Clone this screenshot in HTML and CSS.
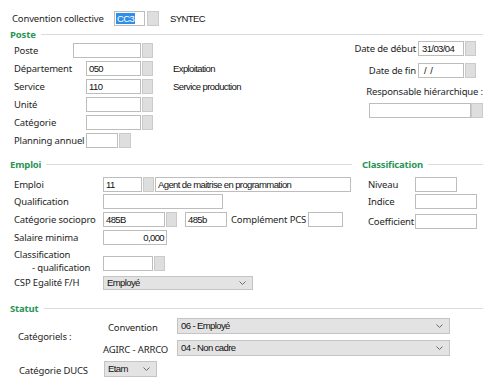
FILE: index.html
```html
<!DOCTYPE html>
<html>
<head>
  <title>Fiche salarié - Poste</title>
  <link rel="stylesheet" href="styles.css">
</head>
<body>

<div class="form">

  <div class="row conv-row">
    <span class="lbl conv-lbl">Convention collective</span>
    <span class="txt w-conv"><span class="sel">CC3</span></span>
    <span class="btn btn-conv"></span>
    <span class="info conv-info">SYNTEC</span>
  </div>

  <!-- Poste -->
  <div class="legend"><span>Poste</span></div>
  <div class="poste">
    <div class="col-left">
      <div class="row"><span class="lbl l-poste">Poste</span><span class="txt w-poste"></span><span class="btn"></span></div>
      <div class="row"><span class="lbl l-std">Département</span><span class="txt w-std">050</span><span class="btn"></span><span class="info">Exploitation</span></div>
      <div class="row"><span class="lbl l-std">Service</span><span class="txt w-std">110</span><span class="btn"></span><span class="info">Service production</span></div>
      <div class="row"><span class="lbl l-std">Unité</span><span class="txt w-std"></span><span class="btn"></span></div>
      <div class="row"><span class="lbl l-std">Catégorie</span><span class="txt w-std"></span><span class="btn"></span></div>
      <div class="row"><span class="lbl l-std">Planning annuel</span><span class="txt w-plan"></span><span class="btn btn-wide"></span></div>
    </div>
    <div class="col-right">
      <div class="row date-row"><span class="lbl">Date de début</span><span class="txt w-date">31/03/04</span><span class="btn"></span></div>
      <div class="row date-row date-fin"><span class="lbl">Date de fin</span><span class="txt w-date">&nbsp;/&nbsp;&nbsp;/</span><span class="btn"></span></div>
      <div class="resp-lbl"><span>Responsable hiérarchique :</span></div>
      <div class="row resp-row"><span class="txt w-resp"></span><span class="btn btn-resp"></span></div>
    </div>
  </div>

  <!-- Emploi / Classification -->
  <div class="emploi-wrap">
    <div class="emploi">
      <div class="legend"><span>Emploi</span></div>
      <div class="row r-emploi"><span class="lbl l-emp">Emploi</span><span class="txt w-code">11</span><span class="btn"></span><span class="txt w-long">Agent de maitrise en programmation</span></div>
      <div class="row r-qualif"><span class="lbl l-emp">Qualification</span><span class="txt w-qualif"></span></div>
      <div class="row r-csp"><span class="lbl l-emp">Catégorie sociopro</span><span class="txt w-csp">485B</span><span class="btn"></span><span class="txt w-pcs">485b</span><span class="lbl l-pcs">Complément PCS</span><span class="txt w-comp"></span></div>
      <div class="row r-sal"><span class="lbl l-emp">Salaire minima</span><span class="txt w-sal num">0,000</span></div>
      <div class="row r-classif">
        <span class="lbl l-emp two-lines">Classification<br><span class="indent">- qualification</span></span>
        <span class="txt w-classif"></span><span class="btn"></span>
      </div>
      <div class="row r-egal"><span class="lbl l-emp">CSP Egalité F/H</span><span class="combo w-egal">Employé<svg class="chev" width="7" height="4" viewBox="0 0 7 4"><polyline points="0.5,0.5 3.5,3.5 6.5,0.5" fill="none" stroke="#6a6a6a" stroke-width="1"/></svg></span></div>
    </div>

    <div class="classif">
      <div class="legend"><span>Classification</span></div>
      <div class="row r-emploi"><span class="lbl l-cls">Niveau</span><span class="txt w-niv"></span></div>
      <div class="row r-qualif"><span class="lbl l-cls">Indice</span><span class="txt w-ind"></span></div>
      <div class="row r-coef"><span class="lbl l-cls">Coefficient</span><span class="txt w-ind"></span></div>
    </div>
  </div>

  <!-- Statut -->
  <div class="legend statut-legend"><span>Statut</span></div>
  <div class="statut">
    <span class="lbl cat-lbl">Catégoriels :</span>
    <div class="cat-rows">
      <div class="row r-conv"><span class="lbl l-stat l-convention">Convention</span><span class="combo w-stat">06 - Employé<svg class="chev" width="7" height="4" viewBox="0 0 7 4"><polyline points="0.5,0.5 3.5,3.5 6.5,0.5" fill="none" stroke="#6a6a6a" stroke-width="1"/></svg></span></div>
      <div class="row r-agirc"><span class="lbl l-stat">AGIRC - ARRCO</span><span class="combo w-stat">04 - Non cadre<svg class="chev" width="7" height="4" viewBox="0 0 7 4"><polyline points="0.5,0.5 3.5,3.5 6.5,0.5" fill="none" stroke="#6a6a6a" stroke-width="1"/></svg></span></div>
    </div>
  </div>
  <div class="row r-ducs"><span class="lbl l-ducs">Catégorie DUCS</span><span class="combo w-ducs">Etam<svg class="chev" width="7" height="4" viewBox="0 0 7 4"><polyline points="0.5,0.5 3.5,3.5 6.5,0.5" fill="none" stroke="#6a6a6a" stroke-width="1"/></svg></span></div>

</div>

</body>
</html>
```

FILE: styles.css
```css
body {
  margin: 0;
  background: #ffffff;
  font-family: "Noto Sans", sans-serif;
  font-size: 9.5px;
  letter-spacing: -0.15px;
  color: #1e1e1e;
}

.form {
  width: 473px;
  padding: 9px 5px 0 10px;
}

.row {
  display: flex;
  align-items: center;
  height: 18px;
}

.lbl {
  flex: none;
  white-space: nowrap;
}

.txt {
  flex: none;
  box-sizing: border-box;
  height: 15px;
  border: 1px solid #bdbdbd;
  background: #fff;
  font-family: "Liberation Sans", sans-serif;
  font-size: 9.5px;
  letter-spacing: -0.6px;
  line-height: 13px;
  padding: 0 2px;
  white-space: nowrap;
  overflow: hidden;
  color: #111;
}

.txt.num {
  text-align: right;
}

.btn {
  flex: none;
  box-sizing: border-box;
  width: 11px;
  height: 15px;
  margin-left: 1px;
  background: #dedede;
  border: 1px solid #cacaca;
}

.info {
  font-family: "Liberation Sans", sans-serif;
  font-size: 9.5px;
  letter-spacing: -0.6px;
  margin-left: 20px;
  color: #111;
}

.legend {
  display: flex;
  align-items: center;
  height: 14px;
  color: #289654;
  font-weight: bold;
}

.legend::after {
  content: "";
  flex: 1;
  border-top: 1px solid #dcdcdc;
  margin-left: 5px;
  margin-top: 1px;
}

.combo {
  flex: none;
  box-sizing: border-box;
  display: flex;
  align-items: center;
  justify-content: space-between;
  height: 16px;
  padding: 0 6px 0 3px;
  background: #e3e3e3;
  border: 1px solid #c4c4c4;
  font-family: "Liberation Sans", sans-serif;
  font-size: 9.5px;
  letter-spacing: -0.6px;
  color: #111;
}

/* convention */
.conv-lbl { width: 104px; padding-left: 2px; box-sizing: border-box; }
.w-conv { width: 31px; padding-left: 1px; }
.sel { background: #2f8ee6; color: #fff; padding: 0 1px; }
.btn-conv { width: 12px; margin-left: 2px; }
.conv-info { margin-left: 11px; }

/* poste */
.poste {
  display: flex;
  justify-content: space-between;
  padding-left: 4px;
}

.l-poste { width: 59px; }
.l-std { width: 72px; }
.w-poste { width: 68px; }
.w-std { width: 55px; }
.w-plan { width: 32px; }
.btn-wide { width: 12px; }

.col-right {
  width: 114px;
  margin-top: -2px;
}

.date-row {
  justify-content: flex-end;
  padding-right: 7px;
}

.date-row .lbl { margin-right: 2px; }
.date-fin { margin-top: 4px; }
.w-date { width: 46px; padding-left: 3px; }

.resp-lbl {
  display: flex;
  justify-content: flex-end;
  margin-top: 6px;
  height: 14px;
  line-height: 14px;
  white-space: nowrap;
}

.resp-row { margin-top: 3px; height: 17px; }
.w-resp { width: 102px; }
.btn-resp { width: 12px; margin-left: 0; }

/* emploi */
.emploi-wrap {
  display: flex;
  gap: 10px;
  margin-top: 8px;
}

.emploi { width: 342px; }
.classif { flex: 1; }

.emploi .row { padding-left: 4px; }
.l-emp { width: 89px; }

.r-emploi { margin-top: 4px; }
.r-qualif { height: 17px; }
.r-sal { height: 17px; margin-top: 1px; }
.r-classif { height: 26px; align-items: flex-start; margin-top: 2px; }
.r-egal { height: 17px; }

.w-code { width: 39px; }
.w-long { width: 196px; margin-left: 1px; }
.w-qualif { width: 120px; }
.w-csp { width: 62px; }
.w-pcs { width: 42px; margin-left: 8px; }
.l-pcs { width: 81px; padding-left: 4px; box-sizing: border-box; }
.w-comp { width: 35px; }
.w-sal { width: 64px; }

.two-lines { line-height: 13px; }
.two-lines .indent { padding-left: 18px; }
.r-classif .txt, .r-classif .btn { margin-top: 8px; }
.w-classif { width: 50px; }
.w-egal { width: 150px; height: 14px; }

/* classification */
.classif .row { padding-left: 6px; }
.l-cls { width: 47px; }
.w-niv { width: 42px; }
.w-ind { width: 62px; }
.r-coef { height: 17px; margin-top: 3px; }

/* statut */
.statut-legend { margin-top: 10px; }

.statut {
  display: flex;
  align-items: center;
  margin-top: 2px;
}

.cat-lbl { width: 91px; padding-left: 8px; box-sizing: border-box; }
.l-stat { width: 76px; padding-left: 2px; padding-top: 3px; box-sizing: border-box; }
.l-convention { padding-left: 7px; }
.r-conv { height: 17px; }
.r-agirc { height: 17px; margin-top: 5px; }
.w-stat { width: 273px; }

.r-ducs { margin-top: 4px; height: 17px; }
.l-ducs { width: 94px; padding-left: 9px; padding-top: 4px; box-sizing: border-box; }
.w-ducs { width: 53px; }
```
